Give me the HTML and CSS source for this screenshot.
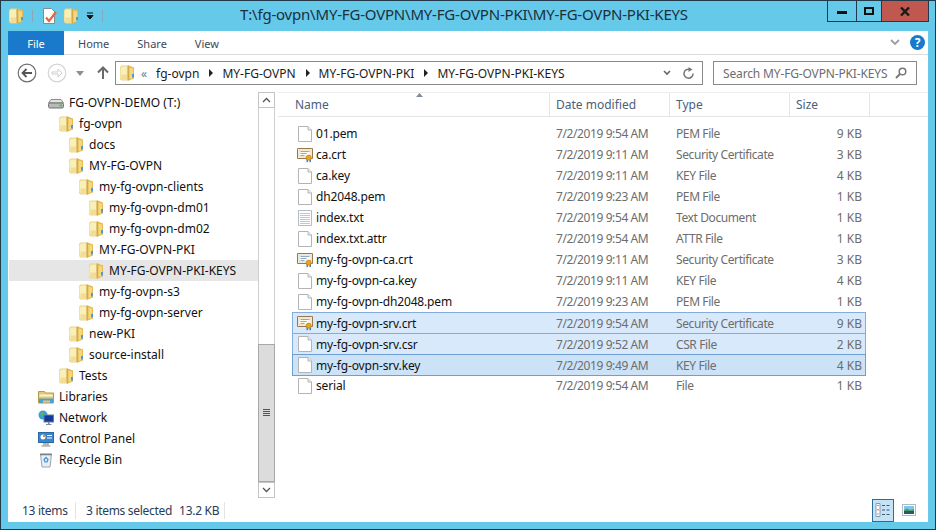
FILE: index.html
```html
<!DOCTYPE html>
<html lang="en">
<head>
  <meta charset="UTF-8">
  <meta name="viewport" content="width=device-width, initial-scale=1.0">
  <title>MY-FG-OVPN-PKI-KEYS</title>
  <link rel="stylesheet" href="styles.css">
</head>
<body>

<svg class="defs">
  <symbol id="folder" viewBox="0 0 16 16">
    <path d="M1 2 2.500.5H9v15H2.500L1 14z" fill="#e9d38a"/>
    <path d="M1.500 3 3 1.500h5v13H3L1.500 13z" fill="#f9efb8"/>
    <path d="M2.500 9.500h5.500v5H3l-.5-1z" fill="#f1dd96"/>
    <path d="M9 .5h.8L15 2.500v11l-5.200 2H9z" fill="#e4bb54"/>
    <path d="M8.700.5h1v15h-1z" fill="#c9a548"/>
    <path d="M10.500 2.500l3.500 1v9.500l-3.500 1z" fill="#f5d87e"/>
    <path d="M13 9h2v3.500h-2z" fill="#4c9bd6"/>
  </symbol>
  <symbol id="file" viewBox="0 0 16 16">
    <path d="M1.500.5h9.500l3.500 3.500v11.500h-13z" fill="#fff" stroke="#b4b4b4"/>
    <path d="M11 .5V4h3.500" fill="#efefef" stroke="#b4b4b4"/>
  </symbol>
  <symbol id="cert" viewBox="0 0 16 16">
    <path d="M.5 1.500h15v10H.5z" fill="#fdfaf2" stroke="#96794f"/>
    <path d="M2 3h12v7H2z" fill="none" stroke="#d7c6a3" stroke-width=".7"/>
    <path d="M3.500 4.500h9M3.500 6.500h6M3.500 8.500h4" stroke="#8fa8c4"/>
    <path d="M9.500 11h1.500v4.500l-.7-.7-.8.700zM12.500 11H14v4.500l-.7-.7-.8.700z" fill="#3a78c0"/>
    <circle cx="11.700" cy="10.700" r="2.600" fill="#e6a522" stroke="#b87b12" stroke-width=".6"/>
  </symbol>
  <symbol id="txt" viewBox="0 0 16 16">
    <path d="M1.500.5h13v15h-13z" fill="#fff" stroke="#b3bcc7"/>
    <path d="M3 3.500h10M3 5.500h10M3 7.500h10M3 9.500h10M3 11.500h10M3 13.500h10" stroke="#b9c8da"/>
  </symbol>
  <symbol id="drive" viewBox="0 0 16 16">
    <path d="M3 4.500h10L15.500 8H.5z" fill="#e4e4e4" stroke="#8c8c8c"/>
    <rect x=".5" y="8" width="15" height="5" rx="1.500" fill="#b9b9b9" stroke="#6e6e6e"/>
    <rect x="11.500" y="9.500" width="2.500" height="2" fill="#45c43c"/>
  </symbol>
  <symbol id="libraries" viewBox="0 0 16 16">
    <path d="M.5 2.500h6l1 1.500h8v10H.5z" fill="#e6c873" stroke="#b49a52"/>
    <path d="M1.500 5.500h13v2h-13z" fill="#fbf3cf"/>
    <path d="M1 14V9.500h14V14h-3v-2.500H5V14z" fill="#4f9fd0"/>
  </symbol>
  <symbol id="network" viewBox="0 0 16 16">
    <circle cx="5" cy="5" r="4.500" fill="#3aa0d8"/>
    <path d="M2 3.500 5 2l1 2-2 2zM5 7l2-1 1 1.500L6 9z" fill="#62b84a"/>
    <rect x="6" y="5" width="9.500" height="7" fill="#123a9c" stroke="#6f7f90"/>
    <path d="M10 12h1.500v2H10zM8 14h5.500v1H8z" fill="#7f8a96"/>
  </symbol>
  <symbol id="panel" viewBox="0 0 16 16">
    <rect x=".5" y="1.500" width="15" height="10" fill="#3a86cc" stroke="#2c6aa4"/>
    <circle cx="5" cy="6" r="2.500" fill="#fff"/>
    <path d="M5 6V3.500A2.500 2.500 0 0 1 7.500 6z" fill="#e88a2a"/>
    <path d="M9 4.500h5M9 7h5" stroke="#fff"/>
    <path d="M5 12h6v2.500H5z" fill="#b6b6b6"/>
    <path d="M3.500 14.500h9v1h-9z" fill="#8e8e8e"/>
  </symbol>
  <symbol id="recycle" viewBox="0 0 16 16">
    <path d="M2.500 2h11l-1.500 13H4z" fill="#e8eef4" stroke="#9aa5b0"/>
    <path d="M2 2.500h12" stroke="#77828e" stroke-width="1.500"/>
    <path d="M6 7.500 8 5.500l2 2-1 2.500H7z" fill="none" stroke="#3b8ed4" stroke-width="1.200"/>
  </symbol>
</svg>

<div class="window">

  <div class="titlebar">
    <div class="quick">
      <svg class="icon"><use href="#folder"/></svg>
      <i class="qsep"></i>
      <svg class="icon note" viewBox="0 0 16 16">
        <path d="M1.500.5h8l3 3v12h-11z" fill="#fff" stroke="#8a8a8a"/>
        <path d="M4 9.500 7 13l7-9" fill="none" stroke="#e8663c" stroke-width="2.200"/>
      </svg>
      <svg class="icon"><use href="#folder"/></svg>
      <svg class="qdrop" width="8" height="8" viewBox="0 0 8 8">
        <path d="M1 1h6M1 3.500h6l-3 3.500z" stroke="#111" fill="#111"/>
      </svg>
      <i class="qsep"></i>
    </div>
    <div class="title">T:\fg-ovpn\MY-FG-OVPN\MY-FG-OVPN-PKI\MY-FG-OVPN-PKI-KEYS</div>
    <div class="winbtns">
      <div class="winbtn"><i class="min"></i></div>
      <div class="winbtn maxbtn"><i class="max"></i></div>
      <div class="winbtn closebtn">
        <svg width="10" height="9" viewBox="0 0 10 9"><path d="M1 .5 9 8.500M9 .5 1 8.500" stroke="#1a1a1a" stroke-width="2.400"/></svg>
      </div>
    </div>
  </div>

  <div class="content">

    <div class="ribbon">
      <div class="tab file-tab">File</div>
      <div class="tab home-tab">Home</div>
      <div class="tab">Share</div>
      <div class="tab">View</div>
      <div class="ribbon-right">
        <svg width="10" height="7" viewBox="0 0 10 7"><path d="M1 1l4 4 4-4" fill="none" stroke="#9aa0a6" stroke-width="1.800"/></svg>
        <span class="help">?</span>
      </div>
    </div>

    <div class="navrow">
      <div class="navbtns">
        <svg class="nav back" width="20" height="20" viewBox="0 0 20 20">
          <circle cx="10" cy="10" r="8.800" fill="#fff" stroke="#6f6f6f" stroke-width="1.200"/>
          <path d="M15 10H6M9.500 6 5.500 10l4 4" fill="none" stroke="#555" stroke-width="1.800"/>
        </svg>
        <svg class="nav forward" width="20" height="20" viewBox="0 0 20 20">
          <circle cx="10" cy="10" r="8.800" fill="#fff" stroke="#d4d4d4" stroke-width="1.200"/>
          <path d="M5 9h6V6l4 4-4 4v-3H5z" fill="#fff" stroke="#cfcfcf"/>
        </svg>
        <svg class="nav drop" width="8" height="5" viewBox="0 0 8 5"><path d="M0 0h8L4 5z" fill="#8e8e8e"/></svg>
        <svg class="nav up" width="12" height="14" viewBox="0 0 12 14">
          <path d="M6 13V2M1 6.500 6 1.500l5 5" fill="none" stroke="#6a6a6a" stroke-width="2"/>
        </svg>
      </div>
      <div class="address">
        <svg class="icon"><use href="#folder"/></svg>
        <span class="chev">&laquo;</span>
        <span class="crumb">fg-ovpn</span><i class="arrow"></i>
        <span class="crumb">MY-FG-OVPN</span><i class="arrow"></i>
        <span class="crumb">MY-FG-OVPN-PKI</span><i class="arrow"></i>
        <span class="crumb">MY-FG-OVPN-PKI-KEYS</span>
        <div class="addr-right">
          <svg width="8" height="6" viewBox="0 0 8 6"><path d="M1 1l3 3 3-3" fill="none" stroke="#666" stroke-width="1.600"/></svg>
          <svg width="12" height="13" viewBox="0 0 12 13"><path d="M10 6.500A4.500 4.500 0 1 1 6.500 2.300" fill="none" stroke="#777" stroke-width="1.500"/><path d="M5.500 0l4 2.500-4 2.500z" fill="#777"/></svg>
        </div>
      </div>
      <div class="search">
        <span>Search MY-FG-OVPN-PKI-KEYS</span>
        <svg width="12" height="12" viewBox="0 0 12 12"><circle cx="7.500" cy="4.500" r="3.300" fill="none" stroke="#777" stroke-width="1.500"/><path d="M5 7 1 11" stroke="#777" stroke-width="2"/></svg>
      </div>
    </div>

    <div class="main">
      <div class="tree">
        <div class="node lvl0"><svg class="icon"><use href="#drive"/></svg>FG-OVPN-DEMO (T:)</div>
        <div class="node lvl1"><svg class="icon"><use href="#folder"/></svg>fg-ovpn</div>
        <div class="node lvl2"><svg class="icon"><use href="#folder"/></svg>docs</div>
        <div class="node lvl2"><svg class="icon"><use href="#folder"/></svg>MY-FG-OVPN</div>
        <div class="node lvl3"><svg class="icon"><use href="#folder"/></svg>my-fg-ovpn-clients</div>
        <div class="node lvl4"><svg class="icon"><use href="#folder"/></svg>my-fg-ovpn-dm01</div>
        <div class="node lvl4"><svg class="icon"><use href="#folder"/></svg>my-fg-ovpn-dm02</div>
        <div class="node lvl3"><svg class="icon"><use href="#folder"/></svg>MY-FG-OVPN-PKI</div>
        <div class="node lvl4 current"><svg class="icon"><use href="#folder"/></svg>MY-FG-OVPN-PKI-KEYS</div>
        <div class="node lvl3"><svg class="icon"><use href="#folder"/></svg>my-fg-ovpn-s3</div>
        <div class="node lvl3"><svg class="icon"><use href="#folder"/></svg>my-fg-ovpn-server</div>
        <div class="node lvl2"><svg class="icon"><use href="#folder"/></svg>new-PKI</div>
        <div class="node lvl2"><svg class="icon"><use href="#folder"/></svg>source-install</div>
        <div class="node lvl1"><svg class="icon"><use href="#folder"/></svg>Tests</div>
        <div class="node root"><svg class="icon"><use href="#libraries"/></svg>Libraries</div>
        <div class="node root"><svg class="icon"><use href="#network"/></svg>Network</div>
        <div class="node root"><svg class="icon"><use href="#panel"/></svg>Control Panel</div>
        <div class="node root"><svg class="icon"><use href="#recycle"/></svg>Recycle Bin</div>
      </div>

      <div class="scrollbar">
        <div class="sbtn"><svg width="9" height="6" viewBox="0 0 9 6"><path d="M1 5l3.500-3.500L8 5" fill="none" stroke="#555" stroke-width="1.300"/></svg></div>
        <div class="strack"></div>
        <div class="sthumb"><i></i><i></i><i></i><i></i></div>
        <div class="sbtn down"><svg width="9" height="6" viewBox="0 0 9 6"><path d="M1 1l3.500 3.500L8 1" fill="none" stroke="#555" stroke-width="1.300"/></svg></div>
      </div>

      <div class="list">
        <div class="head">
          <svg class="sort" width="7" height="4" viewBox="0 0 7 4"><path d="M0 4l3.500-4L7 4z" fill="#7f8c9c"/></svg>
          <div class="col c-name">Name</div>
          <div class="col c-date">Date modified</div>
          <div class="col c-type">Type</div>
          <div class="col c-size">Size</div>
        </div>
        <div class="rows">
          <div class="row"><div class="name"><svg class="icon"><use href="#file"/></svg>01.pem</div><div>7/2/2019 9:54 AM</div><div>PEM File</div><div class="size">9 KB</div></div>
          <div class="row"><div class="name"><svg class="icon"><use href="#cert"/></svg>ca.crt</div><div>7/2/2019 9:11 AM</div><div>Security Certificate</div><div class="size">3 KB</div></div>
          <div class="row"><div class="name"><svg class="icon"><use href="#file"/></svg>ca.key</div><div>7/2/2019 9:11 AM</div><div>KEY File</div><div class="size">4 KB</div></div>
          <div class="row"><div class="name"><svg class="icon"><use href="#file"/></svg>dh2048.pem</div><div>7/2/2019 9:23 AM</div><div>PEM File</div><div class="size">1 KB</div></div>
          <div class="row"><div class="name"><svg class="icon"><use href="#txt"/></svg>index.txt</div><div>7/2/2019 9:54 AM</div><div>Text Document</div><div class="size">1 KB</div></div>
          <div class="row"><div class="name"><svg class="icon"><use href="#file"/></svg>index.txt.attr</div><div>7/2/2019 9:54 AM</div><div>ATTR File</div><div class="size">1 KB</div></div>
          <div class="row"><div class="name"><svg class="icon"><use href="#cert"/></svg>my-fg-ovpn-ca.crt</div><div>7/2/2019 9:11 AM</div><div>Security Certificate</div><div class="size">3 KB</div></div>
          <div class="row"><div class="name"><svg class="icon"><use href="#file"/></svg>my-fg-ovpn-ca.key</div><div>7/2/2019 9:11 AM</div><div>KEY File</div><div class="size">4 KB</div></div>
          <div class="row"><div class="name"><svg class="icon"><use href="#file"/></svg>my-fg-ovpn-dh2048.pem</div><div>7/2/2019 9:23 AM</div><div>PEM File</div><div class="size">1 KB</div></div>
          <div class="row selected"><div class="name"><svg class="icon"><use href="#cert"/></svg>my-fg-ovpn-srv.crt</div><div>7/2/2019 9:54 AM</div><div>Security Certificate</div><div class="size">9 KB</div></div>
          <div class="row selected"><div class="name"><svg class="icon"><use href="#file"/></svg>my-fg-ovpn-srv.csr</div><div>7/2/2019 9:52 AM</div><div>CSR File</div><div class="size">2 KB</div></div>
          <div class="row selected focused"><div class="name"><svg class="icon"><use href="#file"/></svg>my-fg-ovpn-srv.key</div><div>7/2/2019 9:49 AM</div><div>KEY File</div><div class="size">4 KB</div></div>
          <div class="row"><div class="name"><svg class="icon"><use href="#file"/></svg>serial</div><div>7/2/2019 9:54 AM</div><div>File</div><div class="size">1 KB</div></div>
        </div>
      </div>
    </div>

    <div class="status">
      <span class="count">13 items</span>
      <span class="picked"><span>3 items selected</span><span>13.2 KB</span></span>
      <div class="views">
        <div class="view active">
          <svg width="16" height="16" viewBox="0 0 16 16">
            <path d="M1 1.500h4v13H1z" fill="#fff" stroke="#8d99a8"/>
            <path d="M2.500 3h1v1h-1zM2.500 11.500h1v1h-1z" fill="#444"/>
            <path d="M2.500 7h1v1.500h-1z" fill="#d8202a"/>
            <path d="M7 3.500h3M11.500 3.500h3M7 8h3M11.500 8h3M7 12.500h3M11.500 12.500h3" stroke="#44566a" stroke-width="1.200"/>
          </svg>
        </div>
        <div class="view">
          <svg width="14" height="12" viewBox="0 0 14 12">
            <rect x=".5" y=".5" width="13" height="11" fill="#fff" stroke="#aeb8c6"/>
            <path d="M2 2h10v4H2z" fill="#7cc8ea"/>
            <path d="M2 6l3-1.500L8 6l4-1v2H2z" fill="#4a9a76"/>
            <path d="M2 7h10v3H2z" fill="#2a5a60"/>
          </svg>
        </div>
      </div>
    </div>

  </div>
</div>

</body>
</html>
```

FILE: styles.css
```css
* {
  box-sizing: border-box;
}
body {
  margin: 0;
  font-family: "Noto Sans", "Open Sans", sans-serif;
  font-size: 12px;
  color: #111;
  overflow: hidden;
}
.defs {
  display: none;
}
.icon {
  width: 16px;
  height: 16px;
  flex: none;
}

/* Ventana */
.window {
  width: 936px;
  height: 530px;
  display: flex;
  flex-direction: column;
  background-color: #65c9ea;
  border: 1px solid #22394a;
  padding: 0 7px 7px 7px;
}
.titlebar {
  height: 30px;
  display: flex;
  align-items: flex-start;
  flex: none;
}
.quick {
  width: 100px;
  height: 30px;
  display: flex;
  align-items: center;
  gap: 5px;
  flex: none;
}
.qsep {
  width: 1px;
  height: 12px;
  background-color: #8ba6b4;
  margin: 0 3px;
}
.quick .note {
  margin-left: 1px;
}
.qdrop {
  margin-left: 2px;
}
.title {
  flex: 1;
  padding-right: 7px;
  text-align: center;
  font-size: 15px;
  line-height: 26px;
  color: #1c2f3a;
  white-space: nowrap;
  letter-spacing: -0.2px;
}
.winbtns {
  display: flex;
  height: 21px;
  margin-right: -1px;
  border: 1px solid #22394a;
  border-top: none;
  flex: none;
}
.winbtn {
  width: 28px;
  display: flex;
  align-items: center;
  justify-content: center;
}
.maxbtn {
  width: 26px;
  border-left: 1px solid #22394a;
  border-right: 1px solid #22394a;
}
.closebtn {
  width: 46px;
  background-color: #c0584f;
}
.min {
  width: 10px;
  height: 3px;
  background-color: #111;
  margin-top: 3px;
}
.max {
  width: 10px;
  height: 8px;
  border: 2px solid #111;
}

/* Contenido */
.content {
  flex: 1;
  min-height: 0;
  display: flex;
  flex-direction: column;
  background-color: #fff;
}
.ribbon {
  height: 24px;
  display: flex;
  align-items: stretch;
  border-bottom: 1px solid #dadbdc;
  flex: none;
}
.tab {
  padding: 0 14px;
  line-height: 25px;
  font-size: 11px;
  color: #3b4a5c;
}
.file-tab {
  width: 56px;
  padding: 0;
  text-align: center;
  background-color: #1979ca;
  color: #fff;
  margin-bottom: -1px;
}
.ribbon-right {
  margin-left: auto;
  display: flex;
  align-items: center;
  gap: 10px;
  padding: 0 3px 0 0;
}
.help {
  width: 15px;
  height: 15px;
  border-radius: 50%;
  background-color: #1979ca;
  color: #fff;
  font-size: 12px;
  font-weight: bold;
  line-height: 15px;
  text-align: center;
}

.navrow {
  height: 37px;
  display: flex;
  align-items: center;
  flex: none;
  padding: 0 11px 1px 0;
}
.navbtns {
  width: 107px;
  display: flex;
  align-items: center;
  flex: none;
  padding-left: 9px;
}
.nav.forward {
  margin-left: 10px;
}
.nav.drop {
  margin-left: 9px;
}
.nav.up {
  margin-left: 13px;
}
.address {
  width: 588px;
  height: 24px;
  border: 1px solid #8a8a8a;
  display: flex;
  align-items: center;
  padding: 0 0 0 3px;
  color: #1c1c1c;
  flex: none;
}
.chev {
  margin: 0 9px 0 6px;
  color: #777;
}
.arrow {
  width: 0;
  height: 0;
  margin: 0 9px 0 10px;
  border-left: 4px solid #222;
  border-top: 4px solid transparent;
  border-bottom: 4px solid transparent;
}
.addr-right {
  margin-left: auto;
  display: flex;
  align-items: center;
  gap: 12px;
  padding-right: 7px;
}
.search {
  width: 204px;
  height: 24px;
  margin-left: 10px;
  border: 1px solid #8a8a8a;
  display: flex;
  align-items: center;
  justify-content: space-between;
  padding: 0 9px 0 9px;
  color: #6d6d6d;
  letter-spacing: -0.15px;
  flex: none;
}

/* Panel principal */
.main {
  flex: 1;
  min-height: 0;
  display: flex;
}
.tree {
  width: 250px;
  flex: none;
}
.node {
  height: 21px;
  display: flex;
  align-items: center;
  gap: 5px;
  color: #111;
  white-space: nowrap;
}
.lvl0 { padding-left: 40px; }
.lvl1 { padding-left: 50px; }
.lvl2 { padding-left: 60px; }
.lvl3 { padding-left: 70px; }
.lvl4 { padding-left: 80px; }
.root { padding-left: 30px; }
.current {
  background-color: #e6e6e6;
  margin-left: 1px;
  padding-left: 79px;
}

.scrollbar {
  width: 17px;
  display: flex;
  flex-direction: column;
  border-left: 1px solid #cfcfcf;
  border-right: 1px solid #cfcfcf;
  flex: none;
}
.sbtn {
  height: 16px;
  margin: 0 -1px;
  border: 1px solid #c4c4c4;
  display: flex;
  align-items: center;
  justify-content: center;
  flex: none;
}
.strack {
  height: 236px;
  flex: none;
}
.sthumb {
  flex: 1;
  margin: 0 -1px;
  padding-bottom: 2px;
  background-color: #dcdcdc;
  border: 1px solid #a8a8a8;
  display: flex;
  flex-direction: column;
  align-items: center;
  justify-content: center;
  gap: 1px;
}
.sthumb i {
  width: 7px;
  height: 1px;
  background-color: #555;
}

.list {
  flex: 1;
  padding-left: 3px;
  min-width: 0;
}
.head {
  display: flex;
  height: 25px;
  position: relative;
  border-top: 1px solid #ededed;
  border-bottom: 1px solid #e5e5e5;
}
.sort {
  position: absolute;
  left: 138px;
  top: 0;
}
.col {
  padding-left: 6px;
  line-height: 24px;
  color: #4c607a;
  border-right: 1px solid #e5e5e5;
}
.c-name { width: 272px; padding-left: 17px; }
.c-date { width: 120px; }
.c-type { width: 120px; }
.c-size { width: 80px; }

.rows {
  padding: 6px 0 0 14px;
}
.row {
  width: 574px;
  height: 21px;
  display: grid;
  grid-template-columns: 258px 120px 120px 76px;
  align-items: center;
  color: #6d6d6d;
  white-space: nowrap;
  letter-spacing: -0.4px;
  border: 1px solid transparent;
}
.row > div {
  padding-left: 5px;
}
.row .name {
  display: flex;
  align-items: center;
  gap: 3px;
  padding-left: 4px;
  color: #111;
  letter-spacing: -0.15px;
}
.row .size {
  padding: 0 5px 0 0;
  text-align: right;
  letter-spacing: 0;
}
.selected {
  height: 22px;
  background-color: #d9e9fc;
  border: 1px solid #84acdd;
  margin-bottom: -1px;
}
.focused {
  background-color: #cbe2f7;
  border-color: #6f9fd0;
}

.status {
  height: 24px;
  display: flex;
  align-items: center;
  color: #2a3c52;
  flex: none;
  padding-left: 14px;
}
.count {
  width: 54px;
  border-right: 1px solid #e4e4e4;
  letter-spacing: -0.3px;
}
.picked {
  width: 149px;
  display: flex;
  gap: 7px;
  padding-left: 10px;
  border-right: 1px solid #e4e4e4;
  letter-spacing: -0.3px;
}
.views {
  margin-left: auto;
  display: flex;
  align-items: center;
  height: 100%;
  padding-right: 8px;
  gap: 4px;
}
.view {
  width: 22px;
  height: 23px;
  display: flex;
  align-items: center;
  justify-content: center;
}
.view.active {
  background-color: #c5e3f6;
  border: 1px solid #2f6a9c;
}
```
